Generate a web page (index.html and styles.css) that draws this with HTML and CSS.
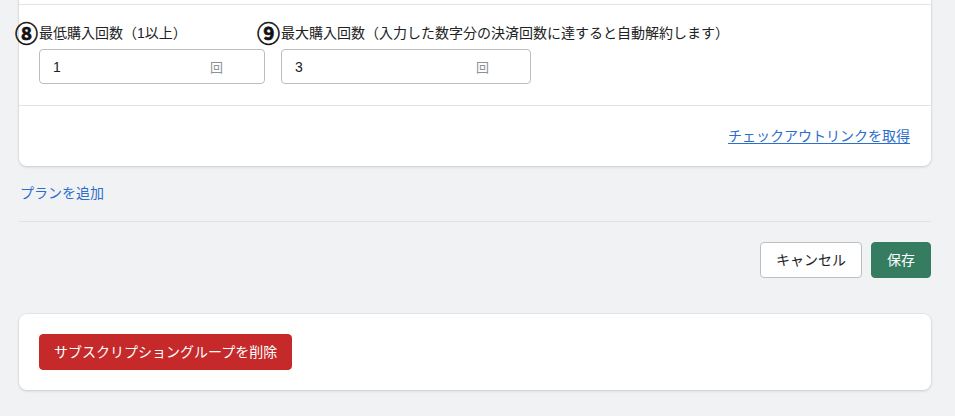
FILE: index.html
```html
<!DOCTYPE html>
<html lang="ja">
<head>
<meta charset="utf-8">
<title>サブスクリプション</title>
<link rel="stylesheet" href="styles.css">
</head>
<body>
<div class="page">
  <div class="card plan-card">
    <div class="card-top"></div>
    <div class="card-section fields">
      <div class="field field-min">
        <label class="field-label"><span class="mark">⑧</span>最低購入回数（1以上）</label>
        <div class="input">
          <span class="input-value">1</span>
          <span class="input-suffix">回</span>
        </div>
      </div>
      <div class="field field-max">
        <label class="field-label"><span class="mark">⑨</span>最大購入回数（入力した数字分の決済回数に達すると自動解約します）</label>
        <div class="input">
          <span class="input-value">3</span>
          <span class="input-suffix">回</span>
        </div>
      </div>
    </div>
    <div class="card-footer">
      <a class="link-underline" href="#">チェックアウトリンクを取得</a>
    </div>
  </div>

  <a class="add-plan" href="#">プランを追加</a>

  <hr class="divider">

  <div class="actions">
    <button class="btn btn-secondary" type="button">キャンセル</button>
    <button class="btn btn-primary" type="button">保存</button>
  </div>

  <div class="card danger-card">
    <button class="btn btn-danger" type="button">サブスクリプショングループを削除</button>
  </div>
</div>
</body>
</html>
```

FILE: styles.css
```css
* {
  box-sizing: border-box;
}

html, body {
  margin: 0;
  padding: 0;
}

body {
  background: #f1f2f4;
  color: #202223;
  font-family: "Liberation Sans", "Noto Sans CJK JP", sans-serif;
  font-size: 14px;
  line-height: 20px;
  overflow: hidden;
}

.page {
  padding: 0 24px 40px 19px;
}

.card {
  background: #ffffff;
  border-radius: 8px;
  box-shadow: 0 0 0 1px rgba(63, 63, 68, 0.04), 0 1px 3px rgba(63, 63, 68, 0.18);
}

.plan-card {
  margin-top: -10px;
}

.card-top {
  height: 15px;
  border-bottom: 1px solid #e1e3e5;
}

.fields {
  display: flex;
  gap: 16px;
  padding: 18px 20px 21px 20px;
  border-bottom: 1px solid #e1e3e5;
}

.field-min {
  width: 226px;
}

.field-max {
  width: 250px;
}

.field-label {
  position: relative;
  display: block;
  height: 20px;
  line-height: 20px;
  margin-bottom: 6px;
  white-space: nowrap;
  color: #202223;
}

.mark {
  position: absolute;
  left: -24px;
  top: -3px;
  font-family: "Noto Sans CJK JP", sans-serif;
  font-size: 23px;
  font-weight: 700;
  line-height: 24px;
  color: #111111;
  -webkit-text-stroke: 0.6px #111111;
}

.input {
  display: flex;
  align-items: center;
  height: 35px;
  padding: 0 41px 0 13px;
  border: 1px solid #b9bec2;
  border-radius: 4px;
  background: #ffffff;
}

.input-value {
  flex: 1;
  color: #202223;
}

.input-suffix {
  color: #8c9196;
  font-family: "Noto Sans CJK JP", sans-serif;
  font-size: 13px;
}

.card-footer {
  display: flex;
  justify-content: flex-end;
  padding: 20px 21px 20px 20px;
}

.link-underline {
  color: #2c6ecb;
  text-decoration: underline;
  text-underline-offset: 2px;
}

.add-plan {
  display: block;
  width: max-content;
  margin-top: 17px;
  margin-left: 1px;
  color: #2c6ecb;
  text-decoration: none;
}

.divider {
  margin: 18px 0 0 0;
  border: 0;
  border-top: 1px solid #dfe1e4;
  height: 0;
}

.actions {
  display: flex;
  justify-content: flex-end;
  gap: 9px;
  padding-top: 20px;
}

.btn {
  height: 36px;
  padding: 0 15px;
  border-radius: 4px;
  font-family: "Liberation Sans", "Noto Sans CJK JP", sans-serif;
  font-size: 14px;
  line-height: 20px;
  cursor: pointer;
}

.btn-secondary {
  background: #ffffff;
  color: #202223;
  border: 1px solid #babfc3;
}

.btn-primary {
  background: #357c61;
  color: #ffffff;
  border: 1px solid #357c61;
}

.danger-card {
  margin-top: 36px;
  padding: 20px;
}

.btn-danger {
  padding: 0 14px;
  background: #c5292a;
  color: #ffffff;
  border: 1px solid #c5292a;
}
```
